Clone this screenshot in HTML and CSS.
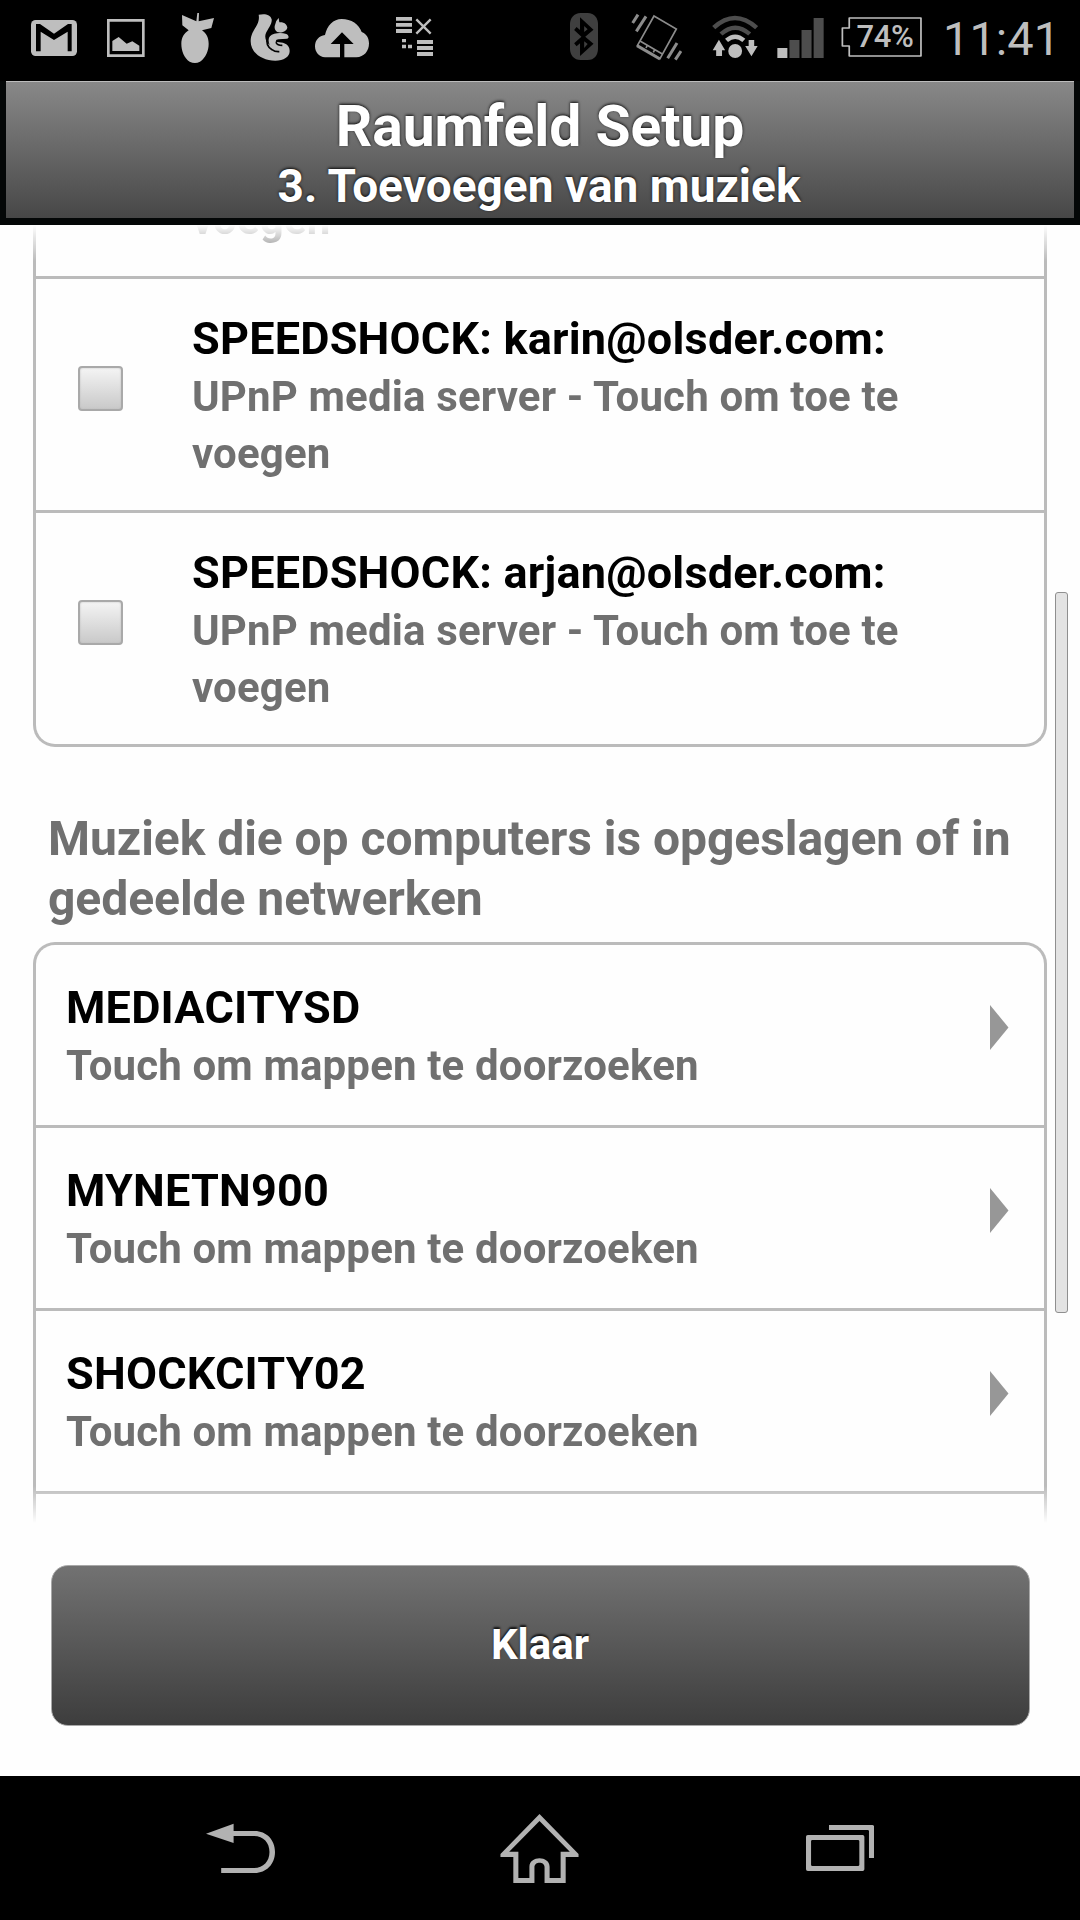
FILE: index.html
```html
<!DOCTYPE html>
<html lang="nl">
<head>
<meta charset="utf-8">
<title>Raumfeld Setup</title>
<link rel="stylesheet" href="styles.css">
</head>
<body>
<div class="screen">
  <div class="statusbar">
    <svg class="icon gmail" viewBox="90 0 144 240">
      <rect x="93" y="60" width="138" height="108" rx="14"/>
      <path class="ink" d="M108 154V72h12l42 29 42-29h11v82h-12V95l-41 25-40-25v59z"/>
    </svg>
    <svg class="icon picture" viewBox="315 0 126 240">
      <path fill-rule="evenodd" d="M321 57h113v114H321zM329 65v98h97V65z"/>
      <path d="M337 153v-30l19-12 24 20 17-7 21 13v16z"/>
    </svg>
    <svg class="icon bomb" viewBox="540 0 108 240">
      <path d="M546 45l43 19 3-25h5l-1 25 46-10-8 30-28 7c13 9 20 22 20 40 0 22-9 42-26 54q-15 8-31 0c-17-12-25-32-25-54 0-18 8-31 22-40l-19-15z"/>
    </svg>
    <svg class="icon squirrel" viewBox="747 0 129 240">
      <path d="M776 44c18-4 36-1 39 14 2 13-11 28-17 41-6 14 1 27 11 36-7-17-3-30 14-34q19-5 36 1c7 3 10 13 2 14l-25 2c-11 1-10 7 1 9 16 1 32 7 32 26 0 18-18 29-43 29-41 0-74-24-74-58 0-36 30-46 24-80z"/>
      <path d="M826 72q3-12 10-18l2 13c12-2 23 5 24 16-2 10-14 15-26 14-11-2-15-14-10-25z"/>
      <path class="cut" d="M803 110c-5 16 0 31 13 39q9 7 22 6"/>
      <path class="cut" d="M866 121l-23 1q-16 0-14 7 3 7 18 7"/>
    </svg>
    <svg class="icon cloud" viewBox="942 0 168 240">
      <path d="M975 172c-17-1-30-15-30-33s12-32 30-34c6-28 25-48 50-48 29 0 52 16 60 39 14 5 22 18 22 34 0 24-15 41-38 42z"/>
      <path class="ink" d="M1026 97l35 35h-28v42h-13v-42h-28z"/>
    </svg>
    <svg class="icon tasks" viewBox="1185 0 117 240">
      <path d="M1188 51h48v11h-48zM1188 69h48v11h-48zM1188 87h48v12h-48zM1251 120h48v12h-48zM1251 138h48v12h-48zM1251 156h48v12h-48zM1206 117h12v10h-12zM1206 134h12v11h-12zM1224 134h12v11h-12z"/>
      <path class="line" d="M1249 58l43 43M1292 58l-43 43"/>
    </svg>
    <svg class="icon bluetooth" viewBox="87 0 81 240" preserveAspectRatio="none">
      <path fill="#3f3f3f" d="M118 39h20c20 0 30 16 30 34v73c0 18-10 34-30 34h-20c-20 0-31-16-31-34V73c0-18 11-34 31-34z"/>
      <path class="ink" fill-rule="evenodd" d="M116 52l39 37-24 21 24 21-39 37v-38l-10 9-7-9 21-20-21-20 7-9 10 9zM128 78v18l10-8zM128 124v20l10-12z"/>
    </svg>
    <svg class="icon vibrate" viewBox="33 -24 153 240">
      <g fill="none" stroke="#8c8c8c">
        <path stroke-width="5" d="M102 24l67 39-49 89-68-39z"/>
        <path stroke-width="5" d="M60 99l67 39M82 112l-4 8M104 125l-4 8"/>
        <path stroke-width="9" d="M51 113l69 40"/>
        <path stroke-width="9" d="M38 45l16-25M49 70l29-45M143 151l28-46M166 155l17-26"/>
      </g>
    </svg>
    <svg class="icon wifi" viewBox="499 0 133 240" preserveAspectRatio="none">
      <g fill="none" stroke="#4d4d4d" stroke-width="13">
        <path d="M504 83q61-58 124 0"/>
        <path d="M525 102q41-38 83 0"/>
        <path stroke="#bebebe" d="M541 121q25-22 50 0"/>
      </g>
      <path d="M519 119l18 32h-9v17h-17v-17h-10zM605 120h16v18h10l-18 31-18-31h10z"/>
      <ellipse cx="566" cy="153" rx="20" ry="21"/>
    </svg>
    <svg class="icon signal" viewBox="687 0 136 240" preserveAspectRatio="none">
      <path d="M688 144h29v30h-29z"/>
      <path fill="#4d4d4d" d="M723 120h29v54h-29zM758 90h29v84h-29zM793 54h29v120h-29z"/>
    </svg>
    <div class="battery">
      <svg class="icon" viewBox="873 0 236 240" preserveAspectRatio="none">
        <path fill="none" stroke="#bebebe" stroke-width="5" stroke-linejoin="round" d="M897 54h209v114H897v-30h-20V84h20z"/>
      </svg>
      <span class="level">74%</span>
    </div>
    <span class="clock">11:41</span>
  </div>

  <header class="header">
    <div class="header-panel">
      <h1 class="header-title">Raumfeld Setup</h1>
      <p class="header-step">3. Toevoegen van muziek</p>
    </div>
  </header>

  <main class="content">
    <div class="scroll">
      <ul class="list list-servers">
        <li class="server server-tail"><p class="sub">voegen</p></li>
        <li class="server">
          <span class="checkbox"></span>
          <div class="server-text">
            <p class="name">SPEEDSHOCK: karin@olsder.com:</p>
            <p class="sub">UPnP media server - Touch om toe te voegen</p>
          </div>
        </li>
        <li class="server">
          <span class="checkbox"></span>
          <div class="server-text">
            <p class="name">SPEEDSHOCK: arjan@olsder.com:</p>
            <p class="sub">UPnP media server - Touch om toe te voegen</p>
          </div>
        </li>
      </ul>
      <h2 class="section-title">Muziek die op computers is opgeslagen of in gedeelde netwerken</h2>
      <ul class="list list-shares">
        <li class="share">
          <div><p class="name">MEDIACITYSD</p><p class="sub">Touch om mappen te doorzoeken</p></div>
          <svg class="arrow" viewBox="0 0 19 45"><path d="M0 0l18.500 22.500L0 45z"/></svg>
        </li>
        <li class="share">
          <div><p class="name">MYNETN900</p><p class="sub">Touch om mappen te doorzoeken</p></div>
          <svg class="arrow" viewBox="0 0 19 45"><path d="M0 0l18.500 22.500L0 45z"/></svg>
        </li>
        <li class="share">
          <div><p class="name">SHOCKCITY02</p><p class="sub">Touch om mappen te doorzoeken</p></div>
          <svg class="arrow" viewBox="0 0 19 45"><path d="M0 0l18.500 22.500L0 45z"/></svg>
        </li>
        <li class="share-next"></li>
      </ul>
    </div>
    <div class="scrollbar"></div>
    <button class="done" type="button">Klaar</button>
  </main>

  <nav class="navbar">
    <svg class="nav-icon back" viewBox="58 0 150 360" preserveAspectRatio="none">
      <path d="M58 131l60-30v22h46c25 0 44 26 44 63s-19 63-44 63H91v-15h71c21 0 34-20 34-48s-13-48-34-48h-44v21z"/>
    </svg>
    <svg class="nav-icon home" viewBox="698 0 172 360" preserveAspectRatio="none">
      <path fill-rule="evenodd" d="M784 72l85 120v9h-28v78h-46v-48c0-17-22-17-22 0v48h-46v-78h-28v-9zM784 93l-66 92h20v79h24v-34c0-34 44-34 44 0v34h24v-79h20z"/>
    </svg>
    <svg class="nav-icon recents" viewBox="1363 0 149 360" preserveAspectRatio="none">
      <path d="M1413 105h94q4 0 4 5v94h-11v-80q0-4-3-4h-84z"/>
      <path fill-rule="evenodd" d="M1367 135h119q4 0 4 5v98q0 5-4 5h-119q-4 0-4-5v-98q0-5 4-5zM1377 150q-3 0-3 4v70q0 4 3 4h99q3 0 3-4v-70q0-4-3-4z"/>
    </svg>
  </nav>
</div>
</body>
</html>
```
FILE: styles.css
```css
* { box-sizing: border-box; margin: 0; padding: 0; }

body {
  background: #000;
  font-family: Roboto, "Liberation Sans", sans-serif;
}

.screen {
  display: flex;
  flex-direction: column;
  width: 1080px;
  height: 1920px;
  overflow: hidden;
  background: #000;
}

/* Android status bar */
.statusbar {
  display: flex;
  height: 81px;
  flex: none;
  color: #bebebe;
}
.icon { display: block; flex: none; height: 80px; fill: #bebebe; }
.icon .ink { fill: #000; }
.icon .cut { fill: none; stroke: #000; stroke-width: 5; }
.icon .line { fill: none; stroke: #bebebe; stroke-width: 7; }
.gmail { width: 48px; margin-left: 30px; }
.picture { width: 42px; margin-left: 27px; }
.bomb { width: 36px; margin-left: 33px; }
.squirrel { width: 43px; margin-left: 33px; }
.cloud { width: 56px; margin-left: 22px; }
.tasks { width: 39px; margin-left: 25px; }
.bluetooth { width: 28px; margin-left: 136px; }
.vibrate { width: 51px; margin-left: 33px; }
.wifi { width: 46px; margin-left: 30px; }
.signal { width: 47px; margin-left: 19px; }
.battery { display: grid; width: 81px; margin-left: 17px; }
.battery > * { grid-area: 1 / 1; }
.battery .icon { width: 81px; }
.level {
  padding: 19px 0 0 15.500px;
  font-size: 31px;
  font-weight: 500;
  line-height: 36px;
  letter-spacing: -0.4px;
}
.clock {
  margin-left: 21px;
  padding-top: 11px;
  font-size: 47px;
  line-height: 56px;
  white-space: nowrap;
}

/* Title */
.header { flex: none; height: 144px; padding: 0 6px 7px; background: #040707; }
.header-panel {
  height: 137px;
  padding-top: 12px;
  border-top: 1px solid #bcbcbc;
  background: linear-gradient(#888, #474747);
  color: #fff;
  text-align: center;
  text-shadow: 0 -1px 3px rgba(0, 0, 0, 0.9);
}
.header-title { font-size: 57px; line-height: 66px; font-weight: 700; letter-spacing: -0.06px; }
.header-step { margin-top: -1px; padding-right: 2px; font-size: 46px; line-height: 54px; font-weight: 700; letter-spacing: 0.02px; }

/* Scrolling lists */
.content { position: relative; flex: none; height: 1551px; background: #fefefe; }
.scroll {
  height: 1300px;
  padding: 0 33px;
  overflow: hidden;
  -webkit-mask-image: linear-gradient(transparent, #000 36px, #000 1261px, transparent 1298px);
  mask-image: linear-gradient(transparent, #000 36px, #000 1261px, transparent 1298px);
}
.list { list-style: none; border: 3px solid #bbb; }
.list-servers { border-top: 0; border-radius: 0 0 22px 22px; }
.list-shares { border-bottom: 0; border-radius: 22px 22px 0 0; }
.name { color: #000; font-size: 45px; line-height: 58px; font-weight: 700; letter-spacing: 0.21px; }
.sub { color: #707070; font-size: 42px; line-height: 57px; font-weight: 700; letter-spacing: 0.15px; }

.server { display: flex; height: 234px; padding: 31px 100px 0 42px; border-bottom: 3px solid #bbb; }
.server:last-child { height: 231px; border-bottom: 0; }
.server-tail { height: 54px; padding: 0 0 28px 156px; align-items: flex-end; }
.server-text { margin-left: 69px; }
.checkbox {
  flex: none;
  width: 45px;
  height: 45px;
  margin-top: 56px;
  border: 2px solid #a9a9a9;
  border-radius: 4px;
  background: linear-gradient(#f4f4f4, #c9c9c9);
  box-shadow: inset 0 0 2px #bbb;
}

.section-title {
  margin: 62px 0 13px;
  padding-left: 15px;
  color: #707070;
  font-size: 48px;
  line-height: 60px;
  font-weight: 700;
  letter-spacing: -0.05px;
}

.share {
  display: flex;
  justify-content: space-between;
  height: 183px;
  padding: 34px 35px 0 30px;
  border-bottom: 3px solid #bbb;
}
.share-next { height: 60px; }
.arrow { width: 19px; height: 45px; margin-top: 26px; fill: #979797; }

.scrollbar {
  position: absolute;
  top: 367px;
  right: 12px;
  width: 13px;
  height: 721px;
  border: 1px solid #8f8f8f;
  border-radius: 3px;
  background: #e3e3e3;
}

.done {
  display: block;
  width: 979px;
  height: 161px;
  margin: 40px 0 0 50.500px;
  padding-bottom: 2px;
  border: 1px solid #a8a8a8;
  border-radius: 17px;
  background: linear-gradient(#727272, #3d3d3d);
  color: #fff;
  font: 700 42px/49px Roboto, "Liberation Sans", sans-serif;
  text-shadow: 0 -2px 2px rgba(0, 0, 0, 0.8);
}

/* Android navigation keys */
.navbar { display: flex; flex: none; height: 144px; padding: 14px 0 0 206px; }
.nav-icon { display: block; flex: none; height: 120px; fill: #b2b2b2; }
.back { width: 69px; }
.home { width: 79px; margin-left: 225px; }
.recents { width: 68.500px; margin-left: 226.800px; }
```
